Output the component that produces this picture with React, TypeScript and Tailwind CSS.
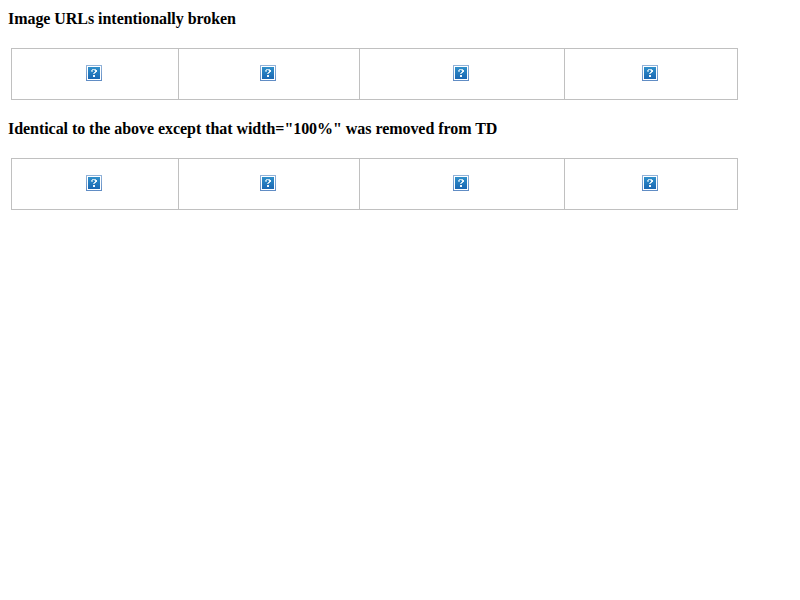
function BrokenImage() {
  return (
    <svg className="block h-4 w-4" viewBox="0 0 16 16" shapeRendering="crispEdges" aria-hidden="true">
      <defs>
        <linearGradient id="fill" x1="0" y1="0" x2="0" y2="1">
          <stop offset="0" stopColor="#2f8fca" />
          <stop offset="1" stopColor="#1b68b3" />
        </linearGradient>
        <linearGradient id="frame" x1="0" y1="0" x2="0" y2="1">
          <stop offset="0" stopColor="#93b3d9" />
          <stop offset="1" stopColor="#5f8bc4" />
        </linearGradient>
      </defs>
      <rect width="16" height="16" fill="url(#frame)" />
      <rect x="1" y="1" width="14" height="14" fill="#fff" />
      <rect x="2" y="2" width="12" height="12" fill="url(#fill)" />
      <g fill="#fff">
        <rect x="6" y="4" width="4" height="1" opacity="0.7" />
        <rect x="5" y="5" width="2" height="1" opacity="0.65" />
        <rect x="8" y="5" width="1" height="1" opacity="0.4" />
        <rect x="9" y="5" width="2" height="2" opacity="0.95" />
        <rect x="5" y="6" width="2" height="1" opacity="0.5" />
        <rect x="8" y="7" width="2" height="1" opacity="0.85" />
        <rect x="7" y="8" width="2" height="1" opacity="0.65" />
        <rect x="7" y="10" width="2" height="2" opacity="0.95" />
      </g>
    </svg>
  );
}

function ImageTable() {
  return (
    <div className="ml-[11px] grid h-[52px] w-[727px] grid-cols-[167px_181px_205px_172px] border border-[#c0c0c0]">
      <div className="border-r border-[#c0c0c0] pl-[74px] pt-4"><BrokenImage /></div>
      <div className="border-r border-[#c0c0c0] pl-[81px] pt-4"><BrokenImage /></div>
      <div className="border-r border-[#c0c0c0] pl-[93px] pt-4"><BrokenImage /></div>
      <div className="pl-[77px] pt-4"><BrokenImage /></div>
    </div>
  );
}

export default function App() {
  return (
    <main className="h-[600px] w-[800px] bg-white pt-[10px] font-['Liberation_Serif',serif] text-base font-bold tracking-[-0.05px] text-black">
      <h4 className="mb-5 ml-2 h-[18px] w-fit whitespace-nowrap leading-[18px]">Image URLs intentionally broken</h4>
      <ImageTable />
      <h4 className="mb-5 ml-2 mt-5 h-[18px] w-fit whitespace-nowrap leading-[18px]">Identical to the above except that width="100%" was removed from TD</h4>
      <ImageTable />
    </main>
  );
}
